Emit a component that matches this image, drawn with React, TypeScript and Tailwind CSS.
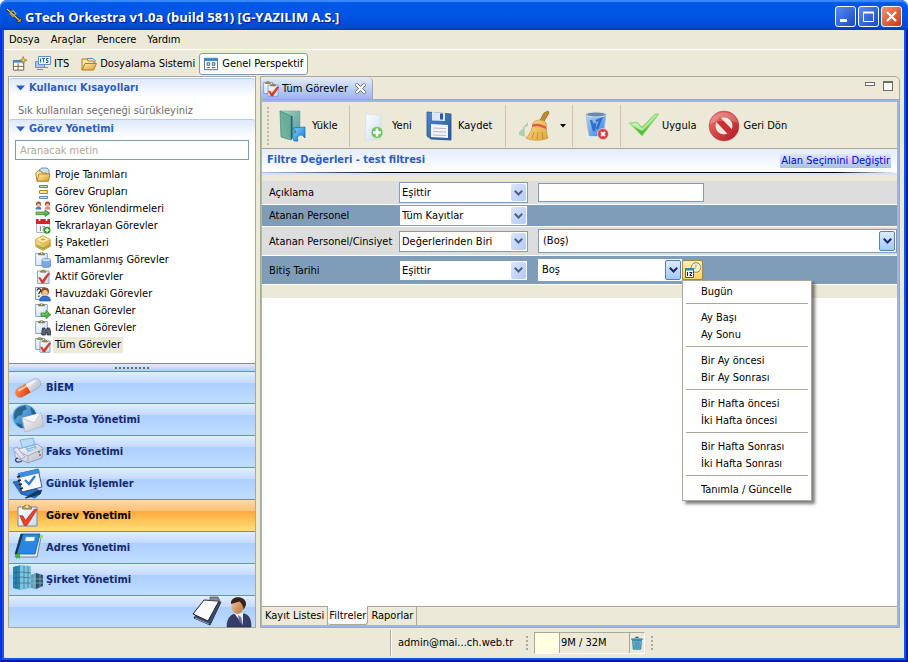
import type { ReactNode } from "react";

type IconProps = { className?: string };

function Icon16({ children, className = "size-4" }: { children: ReactNode; className?: string }) {
  return (
    <svg viewBox="0 0 16 16" className={`shrink-0 ${className}`} aria-hidden="true">
      {children}
    </svg>
  );
}

function Icon32({ children, className = "size-8" }: { children: ReactNode; className?: string }) {
  return (
    <svg viewBox="0 0 32 32" className={`shrink-0 ${className}`} aria-hidden="true">
      {children}
    </svg>
  );
}

/* ---------- shared gradients ---------- */

function Gradients() {
  const list: [string, string, string][] = [
    ["paper", "#ffffff", "#c9dcf2"],
    ["gold", "#fff3b8", "#d99a24"],
    ["straw", "#fbe08a", "#e0a436"],
    ["blue", "#7cc4f2", "#1668b4"],
    ["deep", "#4f86cf", "#2a5aa0"],
    ["teal", "#9fd0b4", "#2f8a98"],
    ["green", "#9be46e", "#2f9a2a"],
    ["lime", "#c9f3a4", "#4fc43a"],
    ["red", "#ee7a74", "#b01218"],
    ["pill", "#ff9a5a", "#e03a06"],
    ["grey", "#ffffff", "#b9bcc8"],
    ["skin", "#f3c9a0", "#b9713c"],
    ["glass", "#b4d8fa", "#2f7ce0"],
    ["sky", "#7fd0ff", "#1478d0"],
  ];
  return (
    <defs>
      {list.map(([id, a, b]) => (
        <linearGradient key={id} id={id} x1="0" y1="0" x2="1" y2="1">
          <stop offset="0" stopColor={a} />
          <stop offset="1" stopColor={b} />
        </linearGradient>
      ))}
    </defs>
  );
}

/* ---------- 16px icons ---------- */

function TrumpetIcon() {
  return (
    <svg viewBox="0 0 16 16" className="size-4 shrink-0" aria-hidden="true">
      <Gradients />
      <path d="M1 2l12 11" stroke="#2a2410" strokeWidth="2.600" />
      <path d="M1 2l12 11" stroke="#e8cf7a" strokeWidth="1.200" />
      <path d="M4 6.500l3-3 3 3-3 3z" fill="none" stroke="#c8a83c" strokeWidth="1.100" />
      <path d="M10.500 15l4.500-4v4z" fill="#e8bd3a" stroke="#2a2410" strokeWidth=".6" />
    </svg>
  );
}

function NewWindowIcon() {
  return (
    <Icon16 className="h-4 w-[15px]">
      <path d="M1.500 4.500h11v10h-11z" fill="#fff" stroke="#6b5f3c" />
      <path d="M1 4h12v2.500H1z" fill="#3f86c8" />
      <path d="M6.500 7v7.500M2 10.500h10.500" stroke="#6b5f3c" />
      <path d="M12 0l1 3 3 1-3 1-1 3-1-3-3-1 3-1z" fill="#f6cf4c" stroke="#8d6a12" strokeWidth=".7" />
    </Icon16>
  );
}

function ItsIcon() {
  return (
    <Icon16>
      <path d="M.5 5.500h9v6h-9zM2 13.500h6" fill="#a9c6ec" stroke="#5f8fce" />
      <path d="M3.500.5h12v8h-12z" fill="#fff" stroke="#5f8fce" />
      <path d="M5.500 2.500v4M7 2.500h3M8.500 2.500v4M13.500 2.500h-2v2h1.500v2H11" fill="none" stroke="#2d5fa8" />
      <path d="M8 11.500h5" stroke="#5f8fce" />
    </Icon16>
  );
}

function OpenFolderIcon() {
  return (
    <Icon16>
      <path d="M1 3h5l1 2h6v3H4l-3 6z" fill="#fbe7a4" stroke="#b07d1c" />
      <path d="M4 7.500h11.500L12.500 14H1.200z" fill="url(#gold)" stroke="#b07d1c" />
      <path d="M6 2.500h6l2 2v2" fill="none" stroke="#4d84c8" />
    </Icon16>
  );
}

function PerspectiveIcon() {
  return (
    <Icon16 className="size-[14px]">
      <path d="M.5 1.500h15v13H.5z" fill="#fff" stroke="#2d5f94" />
      <path d="M1 2h14v2.500H1z" fill="#3c86c4" />
      <path d="M3.500 6.500h3v3h-3zM9.500 6.500h3v3h-3z" fill="#cfe2f6" stroke="#2d5f94" />
      <path d="M3 12h4M9 12h4" stroke="#2d5f94" />
    </Icon16>
  );
}

function ProjectIcon() {
  return (
    <Icon16>
      <path d="M4 3l3-2h5l2 2v5H4z" fill="#cfdff2" stroke="#6d8fbc" />
      <path d="M.8 6l2-2H6l1 2h5v8H2z" fill="#fbe7a4" stroke="#b98428" />
      <path d="M4 7h11l-1.500 7.200H2z" fill="url(#gold)" stroke="#b98428" />
    </Icon16>
  );
}

function GroupsIcon() {
  return (
    <Icon16>
      <path d="M4.500 1.500h8v2h-8z" fill="#b7dcc0" stroke="#4d8f70" />
      <path d="M4.500 6.500h8v3h-8z" fill="#fbe9a0" stroke="#b08a1c" />
      <path d="M4.500 12.500h8v2h-8z" fill="#cfe2f6" stroke="#5b86b8" />
    </Icon16>
  );
}

function PeopleArrowIcon() {
  return (
    <Icon16>
      <path d="M.5 8.500c0-4 6-4 6 0z" fill="#3c7fd0" />
      <path d="M9.500 8.500c0-4 6-4 6 0z" fill="#e87f98" />
      <circle cx="3.500" cy="3" r="2.500" fill="#9a5a2a" />
      <circle cx="3.500" cy="4" r="1.600" fill="#f2c79c" />
      <circle cx="12.500" cy="3" r="2.500" fill="#b5402c" />
      <circle cx="12.500" cy="4" r="1.600" fill="#f2c79c" />
      <path d="M1 11h9V9l5 3.300-5 3.300v-2H1z" fill="url(#green)" stroke="#2c7a30" strokeWidth=".7" />
    </Icon16>
  );
}

function CalendarPlusIcon() {
  return (
    <Icon16>
      <path d="M1.500 2.500h13v12h-13z" fill="#f4f4f6" stroke="#b4b4bc" />
      <path d="M1 1h14v5H1z" fill="#d8202a" />
      <path d="M4.500 0v3M11.500 0v3" stroke="#fff" strokeWidth="1.600" />
      <path d="M5.500 8v5M7.500 8.500h2l-1.500 4" fill="none" stroke="#8a8a94" />
      <circle cx="12" cy="12.300" r="3.500" fill="#2f9a2a" />
      <path d="M12 10.300v4M10 12.300h4" stroke="#fff" strokeWidth="1.400" />
    </Icon16>
  );
}

function PackageIcon() {
  return (
    <Icon16>
      <path d="M8 .8l7.200 3.700v7L8 15.300.8 11.500v-7z" fill="url(#gold)" stroke="#c08a1c" strokeWidth=".8" />
      <path d="M8 .8l7.200 3.700L8 8.300.8 4.500z" fill="#fdeeb0" stroke="#d9a63a" strokeWidth=".7" />
      <path d="M1.500 9.500l6.500 3.300 6.500-3.300v1.500L8 14.300 1.500 11z" fill="#7db53c" />
      <path d="M8 3v3M6 4.500h4" stroke="#e0a020" />
    </Icon16>
  );
}

function Clipboard({ children }: { children?: ReactNode }) {
  return (
    <Icon16>
      <path d="M.7 1.500h11.600v12H.7z" fill="url(#paper)" stroke="#7a9cc8" strokeWidth=".9" />
      <path d="M3.500 2.800c0-2.600 6-2.600 6 0z" fill="#8f8457" stroke="#574f30" strokeWidth=".6" />
      <circle cx="6.500" cy="1.500" r=".7" fill="#f1e2a0" />
      {children}
    </Icon16>
  );
}

const DoneTaskIcon = () => (
  <Clipboard>
    <path d="M7 8c0-2 8.500-2 8.500 0v6c0 2-8.500 2-8.500 0z" fill="#7fa9e0" stroke="#4f7fc0" strokeWidth=".7" />
    <ellipse cx="11.200" cy="8" rx="4" ry="1.200" fill="#c5dcf6" />
  </Clipboard>
);

function ActiveTaskIcon({ className }: IconProps) {
  return (
    <Icon16 className={className ?? "size-4"}>
      <path d="M2.500 2h11.500v12.500H2.500z" fill="url(#paper)" stroke="#7a9cc8" strokeWidth=".9" />
      <path d="M5.500 3.200c0-2.800 5.500-2.800 5.500 0z" fill="#b59d4c" stroke="#6b5a25" strokeWidth=".6" />
      <path d="M3.500 8.500l2 .2 1.700 2.800L13 4.200l1.800.2L8.500 14H6.700z" fill="#e23a1e" stroke="#a81c0a" strokeWidth=".4" />
    </Icon16>
  );
}

const PoolTaskIcon = () => (
  <Icon16>
    <path d="M.6 1.500h9v12h-9z" fill="#eef2f8" stroke="#7a8494" strokeWidth=".9" />
    <path d="M2.200 4.500c0-2.500 3.500-2.300 3.500 0 0 1.500-1.800 1.500-1.800 3.500M3.900 9.500v1.500" fill="none" stroke="#222" strokeWidth="1.200" />
    <path d="M4.500 15c0-7 11-7 11 0z" fill="#2f72cc" stroke="#1c4f9c" strokeWidth=".6" />
    <circle cx="10" cy="5.500" r="4" fill="#8a4a1c" />
    <circle cx="10" cy="7" r="2.900" fill="#f2bd8a" />
  </Icon16>
);

const AssignedTaskIcon = () => (
  <Clipboard>
    <path d="M6 10h5V7.500l4.800 4.200L11 15.800v-2.500H6z" fill="url(#green)" stroke="#2c7a30" strokeWidth=".7" />
  </Clipboard>
);

const WatchedTaskIcon = () => (
  <Clipboard>
    <path d="M7.500 8h2.500v2h2V8h2.500l1.200 4v3h-3.500v-2.500h-1.800V15H6.800v-3z" fill="#5a6674" stroke="#252d38" strokeWidth=".8" />
  </Clipboard>
);

function AllTasksIcon() {
  return (
    <Icon16>
      <path d="M.7 1.500h9v11h-9z" fill="url(#paper)" stroke="#7a9cc8" strokeWidth=".9" />
      <path d="M2.500 2.500c0-2.500 5-2.500 5 0z" fill="#b59d4c" stroke="#6b5a25" strokeWidth=".6" />
      <path d="M5 4h10v11.300H5z" fill="url(#paper)" stroke="#7a9cc8" strokeWidth=".9" />
      <path d="M7.500 5c0-2.500 5-2.500 5 0z" fill="#b59d4c" stroke="#6b5a25" strokeWidth=".6" />
      <path d="M5.500 10l1.800.2 1.400 2.200L14 6l1.800.2L9.800 15H8z" fill="#e23a1e" stroke="#a81c0a" strokeWidth=".4" />
    </Icon16>
  );
}

function TrashSmallIcon() {
  return (
    <Icon16 className="h-4 w-[14px]">
      <path d="M1.500 3.500h13M6 1.500h4" stroke="#1d6f96" strokeWidth="1.500" />
      <path d="M3 5h10l-.7 10H3.700z" fill="#7cc4dc" stroke="#1d6f96" />
      <path d="M5.800 6v8M8 6v8M10.200 6v8" stroke="#1d6f96" />
    </Icon16>
  );
}

function DateClockIcon() {
  return (
    <Icon16 className="size-4">
      <circle cx="11" cy="5.500" r="4.800" fill="#f6f0d8" stroke="#8b8468" />
      <path d="M11 2.500v3l-2 1.500" fill="none" stroke="#c89a20" />
      <path d="M.5 6.500h8v9h-8z" fill="#fff" stroke="#1f5fa8" />
      <path d="M0 6h9v2.500H0z" fill="#2f8aa8" />
      <path d="M2.500 10v4M4.500 10.500H7L4.800 13.500H7" fill="none" stroke="#12127c" />
    </Icon16>
  );
}

/* ---------- 32px icons ---------- */

const PillIcon = () => (
  <Icon32>
    <g transform="rotate(-30 16 16)">
      <rect x="2" y="11" width="28" height="10" rx="5" fill="url(#grey)" stroke="#9aa4cc" strokeWidth=".6" />
      <path d="M16 11H7a5 5 0 0 0 0 10h9z" fill="url(#pill)" />
      <rect x="6" y="12.500" width="20" height="2" rx="1" fill="#fff" opacity=".65" />
    </g>
  </Icon32>
);

const GlobeMailIcon = () => (
  <Icon32>
    <circle cx="12.500" cy="12.500" r="12" fill="url(#blue)" />
    <path d="M3 7c4-6 8-4 10-6l2 4-4 2-1 4-4 1-3 4c-2-3-1-6 0-9zM18 3c4 2 6 6 6 9l-4-2zM4 19l5 1 2 4c-3 0-6-2-7-5z" fill="#1d5878" opacity=".8" />
    <path d="M10 14l19-5 3 13-19 6z" fill="url(#grey)" stroke="#b0b0b4" strokeWidth=".7" />
    <path d="M10 14l12 5 7-10" fill="#f6f6f6" stroke="#bcbcc0" strokeWidth=".8" />
  </Icon32>
);

const FaxIcon = () => (
  <Icon32>
    <path d="M8 4l13-2 3 9-13 3z" fill="#b8dbf8" stroke="#6f9fd0" strokeWidth=".7" />
    <path d="M3 14l22-6 6 4-1 10-14 5-13-6z" fill="url(#grey)" stroke="#8c90b4" strokeWidth=".8" />
    <path d="M10 17l6 3 15-7" fill="none" stroke="#9a9cc0" strokeWidth=".8" />
    <path d="M16 20v7" stroke="#9a9cc0" strokeWidth=".8" />
    <path d="M13 11l9-3 3 4-9 4z" fill="#7fb8ea" />
    <path d="M15 12l7-2M16 14l7-2" stroke="#e8f4ff" strokeWidth=".8" />
    <path d="M1 13l4-2 8 10-4 2z" fill="#dfe2f2" stroke="#8c90b4" strokeWidth=".7" />
    <path d="M6 22c-5 1-2 6 4 3" fill="none" stroke="#3a3a44" strokeWidth="1.200" />
    <circle cx="27" cy="16" r="1" fill="#40a060" />
    <circle cx="28" cy="19" r="1" fill="#e04040" />
  </Icon32>
);

const PlannerIcon = () => (
  <Icon32>
    <path d="M1 14l8 12 14 4 6-5-14-14z" fill="#2d6fc4" stroke="#164a94" strokeWidth=".7" />
    <path d="M6 6l20-5 4 18-20 5z" fill="#f8fbff" stroke="#2b3b58" strokeWidth=".8" />
    <path d="M6 5l21-4 1 4-21 5z" fill="#3f8be0" />
    <path d="M13 12l4 4 6-8" fill="none" stroke="#2b78d0" strokeWidth="2.200" />
    <path d="M5 9l3-1M6 13l3-1M7 17l3-1M8 21l3-1" stroke="#222" strokeWidth="1.400" />
    <path d="M13 30l12-7 5-1-2 4-13 4z" fill="#123c66" stroke="#0a2440" strokeWidth=".5" />
  </Icon32>
);

const TaskBigIcon = () => (
  <Icon32>
    <path d="M6 7h19v19H6z" fill="url(#paper)" stroke="#6d88b4" />
    <path d="M10.500 9c0-5 9-5 9 0z" fill="#c9b062" stroke="#6b5a25" strokeWidth=".8" />
    <circle cx="15" cy="6.500" r="1.200" fill="#fff2b4" />
    <path d="M7.500 15.500l3.500.3 2.500 4.500L22.500 9l2.800.4L15 25.500h-3z" fill="#e8412a" stroke="#a81c0a" strokeWidth=".5" />
  </Icon32>
);

const AddressBookIcon = () => (
  <Icon32>
    <path d="M8 5h21l-4 20H3z" fill="#e9edf2" stroke="#59677c" strokeWidth=".8" />
    <path d="M9 2h19l-5 20H3z" fill="#2a86e0" stroke="#1658a0" strokeWidth=".8" />
    <path d="M9 2h2L5 22H3z" fill="#20303f" />
    <path d="M14 5h9l-1 4h-9z" fill="#fff" stroke="#9cb4d0" strokeWidth=".5" />
    <path d="M4 22h4v5l-2-1.500L4 27z" fill="#45b43a" />
    <path d="M28 3h3v3l-3 1z" fill="#9edc6a" />
  </Icon32>
);

const BuildingIcon = () => (
  <Icon32>
    <path d="M1 3l8-2v25l-8-2z" fill="#2f86ac" />
    <path d="M8 1l11 1v22L8 26z" fill="#7fc4de" />
    <path d="M1 9l7-1 11 1M1 14l7-1 11 1M1 19h18M4 2v23M12 2v23M16 2v22" fill="none" stroke="#1d5f7c" strokeWidth=".7" opacity=".8" />
    <path d="M19 11l5-2v16l-5-1z" fill="#5f9cb8" />
    <path d="M24 9l7 2v11l-7 3z" fill="#2d5468" />
    <path d="M19 15h12M19 19h12M22 10v15M28 10v14" stroke="#9fc4d4" strokeWidth=".6" />
  </Icon32>
);

const NotepadIcon = () => (
  <Icon32>
    <path d="M14 6l16 0-11 23L3 22z" fill="#3b4c74" stroke="#26324f" />
    <path d="M13 4l15 1-11 20L2 18z" fill="#fafafa" stroke="#222" />
    <path d="M19 1l8 0 2 4-10-.5z" fill="#85879a" stroke="#4c4e60" strokeWidth=".7" />
    <path d="M4 22l14 6" stroke="#8fa0c8" />
  </Icon32>
);

const BusinessmanIcon = () => (
  <Icon32>
    <path d="M4 31c0-8 3-12 8-13l10 0c5 2 6 7 6 13z" fill="#343c68" stroke="#1f2547" strokeWidth=".6" />
    <path d="M11 17h9l0 12z" fill="#eef0f8" />
    <path d="M15 19l3 2 2 8-4-4z" fill="#6a6ea4" />
    <ellipse cx="14.500" cy="10" rx="6" ry="8" fill="url(#skin)" />
    <path d="M8 8C7-1 24-1 23 9l-2.500 5c0-4-2-7-4-8.500z" fill="#3a2216" />
  </Icon32>
);

const LoadIcon = () => (
  <Icon32>
    <path d="M3 1h20v21l-4 4-7 2z" fill="url(#teal)" opacity=".85" stroke="#6b9c90" strokeWidth=".6" />
    <path d="M3 1l11 5v24L4 27z" fill="#66ac94" opacity=".9" stroke="#2f7f7c" strokeWidth=".7" />
    <path d="M14 6v24l1.500-2V6z" fill="#2b5f70" />
    <path d="M17 31c-3-5-1-9 2-9l-3-4 12-1v11l-3-3c-3 0-6 1-4 6z" fill="url(#sky)" stroke="#1668a8" strokeWidth=".7" />
  </Icon32>
);

const NewIcon = () => (
  <Icon32>
    <path d="M8 4l15 1v24l-16 1z" fill="url(#paper)" stroke="#c8d4e0" strokeWidth=".5" />
    <circle cx="19" cy="22.500" r="6" fill="#6ac45c" stroke="#d4ecd0" strokeWidth=".8" />
    <path d="M19 18.500v8M15 22.500h8" stroke="#fff" strokeWidth="2.600" />
  </Icon32>
);

const SaveIcon = () => (
  <Icon32>
    <path d="M4 2l24 2v26l-20-1-4-3z" fill="url(#deep)" stroke="#274f8c" strokeWidth=".8" />
    <path d="M9 2l13 1v8l-13-.5z" fill="#dce7f6" />
    <path d="M17 3.500h3v6h-3z" fill="#2a5aa0" />
    <path d="M8 14l17 1v13l-17-1z" fill="#f4f5f7" />
    <path d="M10 18l13 .6M10 21.500l13 .6M10 25l13 .6" stroke="#b4bac8" />
  </Icon32>
);

const BroomIcon = () => (
  <Icon32>
    <path d="M1 25c-1-4 3-5 6-8 0 3-1 8 1 10zM4 18l6-6 0 4z" fill="#a8c8a8" opacity=".85" />
    <path d="M21 12L26 3l4-2 1 2-6 10z" fill="#c08a2c" stroke="#7a5414" strokeWidth=".6" />
    <path d="M15 13c3-4 10-4 13 0 1 6 0 10 2 15-6 3-15 3-22 0 4-4 6-8 7-15z" fill="url(#straw)" stroke="#c4923a" strokeWidth=".7" />
    <path d="M14.500 14.500c5-2 9 0 13.500 2v2.500c-4-2-9-4-14-2z" fill="#e0564a" />
    <path d="M14 28l2-6M19 29l1-7M25 29l-1-7" stroke="#b98428" strokeWidth=".8" />
  </Icon32>
);

const DeleteBinIcon = () => (
  <Icon32>
    <path d="M5 4h20l-3 23H8z" fill="url(#glass)" stroke="#9cb8d4" strokeWidth=".8" />
    <ellipse cx="15" cy="4.500" rx="10" ry="2.500" fill="#6f88a4" stroke="#d4dfea" />
    <path d="M10 10l3 11 1-8M16 19l4-10-5 2" fill="none" stroke="#1454b8" strokeWidth="2.400" opacity=".7" />
    <path d="M6 22l1 5h14" fill="none" stroke="#eaf4ff" strokeWidth="1.400" />
    <circle cx="22" cy="24" r="5.500" fill="#dc3a3a" stroke="#f6d4d0" strokeWidth=".8" />
    <path d="M20 22l4 4M24 22l-4 4" stroke="#fff" strokeWidth="1.800" />
  </Icon32>
);

const ApplyIcon = () => (
  <Icon32>
    <path d="M1 13l8-1 5 5L27 4h4L14 26z" fill="url(#lime)" stroke="#8cd07c" strokeWidth=".7" />
    <path d="M3 14l6-1 5 6L27 5h2L14 21z" fill="#e8fbd8" opacity=".55" />
    <path d="M5 16l9 9 8-10-8 6z" fill="#3fb42c" opacity=".7" />
  </Icon32>
);

const BackIcon = () => (
  <Icon32>
    <circle cx="16" cy="16" r="15" fill="url(#red)" stroke="#b84048" strokeWidth=".5" />
    <circle cx="16" cy="16" r="8.500" fill="#ece9d8" />
    <path d="M8 11.500L12 7l13 13.500-4.500 4.500z" fill="#cc2e36" />
    <path d="M2 14c2-14 24-16 28-1-9-3-18-3-28 1z" fill="#fff" opacity=".22" />
  </Icon32>
);

/* ---------- window chrome ---------- */

function TitleBar() {
  const base =
    "flex size-[21px] items-center justify-center rounded-[3px] border border-white";
  return (
    <header className="flex h-[30px] shrink-0 items-center gap-[3px] rounded-t-[7px] bg-linear-to-b from-[#0058e6] via-[#0055e5] to-[#0047d0] pr-[6px] pl-[6px] shadow-[inset_0_2px_1px_#3b8bff,inset_0_-2px_1px_#0040c0]">
      <TrumpetIcon />
      <h1 className="flex-1 truncate pt-[3px] font-['Open_Sans','Noto_Sans',sans-serif] text-[13px] leading-[18px] font-bold text-white [text-shadow:1px_1px_1px_#0a1883]">
        GTech Orkestra v1.0a (build 581) [G-YAZILIM A.S.]
      </h1>
      <div className="flex gap-[2px] pt-[2px]">
        <button aria-label="Simge durumuna küçült" className={`${base} bg-linear-to-br from-[#5a8bf0] to-[#1c46c8]`}>
          <svg viewBox="0 0 19 19" className="size-[19px]" aria-hidden="true">
            <path d="M4 12h7v3H4z" fill="#fff" />
          </svg>
        </button>
        <button aria-label="Ekranı kapla" className={`${base} bg-linear-to-br from-[#5a8bf0] to-[#1c46c8]`}>
          <svg viewBox="0 0 19 19" className="size-[19px]" aria-hidden="true">
            <path d="M4.500 5.500h10v9h-10zM4 5h11M4 6h11" fill="none" stroke="#fff" />
          </svg>
        </button>
        <button aria-label="Kapat" className={`${base} bg-linear-to-br from-[#f0906c] to-[#c8330c]`}>
          <svg viewBox="0 0 19 19" className="size-[19px]" aria-hidden="true">
            <path d="M5 5l9 9M14 5l-9 9" stroke="#fff" strokeWidth="2.200" />
          </svg>
        </button>
      </div>
    </header>
  );
}

function MenuBar() {
  return (
    <nav className="flex h-5 shrink-0 items-center gap-[11px] border-b border-white pl-[5px]">
      {["Dosya", "Araçlar", "Pencere", "Yardım"].map((m) => (
        <button key={m}>{m}</button>
      ))}
    </nav>
  );
}

function PerspectiveBar() {
  return (
    <div className="flex h-[26px] shrink-0 items-center pt-px pl-2">
      <button aria-label="Yeni perspektif" className="mr-2">
        <NewWindowIcon />
      </button>
      <button className="mr-3 flex items-center gap-[3px]">
        <ItsIcon />
        ITS
      </button>
      <button className="flex items-center gap-[3px]">
        <OpenFolderIcon />
        Dosyalama Sistemi
      </button>
      <button className="ml-1 flex h-[22px] items-center gap-1 rounded-[3px] border border-[#7f9db9] bg-white px-1">
        <PerspectiveIcon />
        Genel Perspektif
      </button>
    </div>
  );
}

/* ---------- left side ---------- */

function SectionHeader({ title }: { title: string }) {
  return (
    <h2 className="rounded-t-[3px] border-t border-[#b4cbf2] bg-linear-to-b from-[#dfe9fc] to-white">
      <button className="flex h-[18px] w-full items-center gap-1 pl-[7px] font-bold text-[#2a5fc0]">
        <svg viewBox="0 0 9 6" className="h-[6px] w-[9px]" aria-hidden="true">
          <path d="M0 .5h9L4.500 5.500z" fill="#2a5fc0" />
        </svg>
        {title}
      </button>
    </h2>
  );
}

const tasks: [string, ReactNode][] = [
  ["Proje Tanımları", <ProjectIcon />],
  ["Görev Grupları", <GroupsIcon />],
  ["Görev Yönlendirmeleri", <PeopleArrowIcon />],
  ["Tekrarlayan Görevler", <CalendarPlusIcon />],
  ["İş Paketleri", <PackageIcon />],
  ["Tamamlanmış Görevler", <DoneTaskIcon />],
  ["Aktif Görevler", <ActiveTaskIcon />],
  ["Havuzdaki Görevler", <PoolTaskIcon />],
  ["Atanan Görevler", <AssignedTaskIcon />],
  ["İzlenen Görevler", <WatchedTaskIcon />],
  ["Tüm Görevler", <AllTasksIcon />],
];

const modules: [string, ReactNode][] = [
  ["BİEM", <PillIcon />],
  ["E-Posta Yönetimi", <GlobeMailIcon />],
  ["Faks Yönetimi", <FaxIcon />],
  ["Günlük İşlemler", <PlannerIcon />],
  ["Görev Yönetimi", <TaskBigIcon />],
  ["Adres Yönetimi", <AddressBookIcon />],
  ["Şirket Yönetimi", <BuildingIcon />],
];

const barBlue =
  "bg-[linear-gradient(to_bottom,#e1edff_0%,#c3daff_36%,#adcfff_37%,#c0dcff_100%)] border-[#5f8fcf]";
const barOrange =
  "bg-[linear-gradient(to_bottom,#ffd9a6_0%,#ffc07a_36%,#ffaa3e_37%,#ffdf79_100%)] border-[#5f8fcf]";

function Sidebar() {
  return (
    <aside className="flex w-[248px] shrink-0 flex-col border border-[#aca899] bg-white pt-px">
      <SectionHeader title="Kullanıcı Kısayolları" />
      <p className="flex h-[22px] items-end pl-[9px] leading-4 text-[#6d6d6d]">
        Sık kullanılan seçeneği sürükleyiniz
      </p>
      <SectionHeader title="Görev Yönetimi" />
      <div className="px-[6px] pt-[2px]">
        <input
          type="text"
          aria-label="Aranacak metin"
          placeholder="Aranacak metin"
          className="h-5 w-full border border-[#7f9db9] bg-white px-1 outline-none placeholder:text-[#aca899]"
        />
      </div>
      <ul className="flex-1 pt-[6px] pl-[26px]">
        {tasks.map(([name, icon]) => (
          <li key={name}>
            <button className="flex h-[17px] items-center gap-[2px]">
              {icon}
              <span
                className={`px-[2px] leading-4 ${name === "Tüm Görevler" ? "bg-[#ece9d8]" : ""}`}
              >
                {name}
              </span>
            </button>
          </li>
        ))}
      </ul>
      <div className="flex h-2 items-center justify-center gap-[2px] border-t border-[#5f8fcf] bg-linear-to-b from-[#e1edff] to-[#adcfff]">
        {Array.from({ length: 9 }, (_, i) => (
          <span key={i} className="size-[2px] bg-[#6b6b60]" />
        ))}
      </div>
      <nav>
        {modules.map(([name, icon]) => {
          const active = name === "Görev Yönetimi";
          return (
            <button
              key={name}
              className={`flex h-8 w-full items-center gap-[2px] border-t pl-[3px] font-bold ${active ? barOrange : barBlue} ${active ? "text-black" : "text-[#15296b]"}`}
            >
              {icon}
              {name}
            </button>
          );
        })}
        <div className={`flex h-8 items-center justify-end border-t ${barBlue}`}>
          <button aria-label="Not defteri">
            <NotepadIcon />
          </button>
          <button aria-label="Kullanıcı">
            <BusinessmanIcon />
          </button>
        </div>
      </nav>
    </aside>
  );
}

/* ---------- editor area ---------- */

function Grip() {
  return (
    <span className="flex flex-col gap-[2px]">
      {Array.from({ length: 10 }, (_, i) => (
        <span key={i} className="size-[2px] rounded-full bg-[#aca899]" />
      ))}
    </span>
  );
}

const Divider = () => <span className="w-px self-stretch bg-[#c9c5b2]" />;

function EditorTabs() {
  return (
    <div className="flex h-[23px] items-stretch rounded-tr-[5px] border-b border-[#aca899]">
      <button className="flex items-center gap-[3px] rounded-tr-[5px] border-r border-[#aca899] bg-linear-to-b from-[#e6ecf6] to-[#99b4f0] pt-px pr-[6px] pl-[2px]">
        <AllTasksIcon />
        Tüm Görevler
        <svg viewBox="0 0 11 11" className="ml-1 size-[11px]" aria-hidden="true">
          <path
            d="M.5 1.500l1-1h1l3 3 3-3h1l1 1v1l-3 3 3 3v1l-1 1h-1l-3-3-3 3h-1l-1-1v-1l3-3-3-3z"
            fill="#fff"
            stroke="#6d6d62"
          />
        </svg>
      </button>
      <div className="ml-auto flex gap-2 pt-1 pr-[6px]">
        <button aria-label="Küçült" className="mt-px h-1 w-[10px] border border-[#6d6a5e] bg-white" />
        <button aria-label="Büyüt" className="h-[10px] w-[10px] border border-t-2 border-[#6d6a5e] bg-white" />
      </div>
    </div>
  );
}

function Toolbar() {
  return (
    <div className="flex h-[47px] items-center border-b border-[#aca899] pt-[3px] pb-px pl-[5px]">
      <Grip />
      <button className="ml-2 flex w-[72px] items-center gap-[3px]">
        <LoadIcon />
        Yükle
      </button>
      <Divider />
      <button className="ml-2 flex w-[65px] items-center gap-[2px]">
        <NewIcon />
        Yeni
      </button>
      <button className="flex w-[82px] items-center gap-[3px]">
        <SaveIcon />
        Kaydet
      </button>
      <Divider />
      <button aria-label="Temizle" className="ml-3 flex w-[54px] items-center justify-between pr-[6px]">
        <BroomIcon />
        <svg viewBox="0 0 6 4" className="h-1 w-[6px]" aria-hidden="true">
          <path d="M0 0h6L3 3.500z" />
        </svg>
      </button>
      <Divider />
      <button aria-label="Sil" className="flex w-[47px] justify-center">
        <DeleteBinIcon />
      </button>
      <Divider />
      <button className="ml-[7px] flex items-center gap-[2px]">
        <ApplyIcon />
        Uygula
      </button>
      <button className="ml-3 flex items-center gap-[3px]">
        <BackIcon />
        Geri Dön
      </button>
    </div>
  );
}

function Chevron({ color }: { color: string }) {
  return (
    <svg viewBox="0 0 9 6" className="h-[6px] w-[9px]" aria-hidden="true">
      <path d="M.8.800l3.700 3.700L8.200.800" fill="none" stroke={color} strokeWidth="2" />
    </svg>
  );
}

function Operator({ label, value }: { label: string; value: string }) {
  return (
    <div className="relative h-[21px] w-[129px] shrink-0 border border-[#7f9db9] bg-white">
      <select
        aria-label={`${label} koşulu`}
        className="size-full appearance-none bg-transparent pt-px pr-5 pl-[2px] outline-none"
      >
        <option>{value}</option>
      </select>
      <span className="pointer-events-none absolute inset-y-px right-px flex w-[15px] items-center justify-center rounded-[2px] bg-linear-to-br from-[#dbe6fd] to-[#b4c9f8]">
        <Chevron color="#4d6185" />
      </span>
    </div>
  );
}

function ValueSelect({ label, value, className }: { label: string; value: string; className: string }) {
  return (
    <div className={`relative bg-white ${className}`}>
      <select
        aria-label={`${label} değeri`}
        className="size-full appearance-none bg-transparent pr-5 pl-1 outline-none"
      >
        <option>{value}</option>
      </select>
      <span className="pointer-events-none absolute inset-y-px right-px flex w-4 items-center justify-center rounded-[2px] border border-[#5b7fb0] bg-linear-to-b from-[#dcebff] to-[#a4c8fa]">
        <Chevron color="#15296b" />
      </span>
    </div>
  );
}

const menuGroups = [
  ["Bugün"],
  ["Ay Başı", "Ay Sonu"],
  ["Bir Ay öncesi", "Bir Ay Sonrası"],
  ["Bir Hafta öncesi", "İki Hafta öncesi"],
  ["Bir Hafta Sonrası", "İki Hafta Sonrası"],
  ["Tanımla / Güncelle"],
];

function DateMenu() {
  return (
    <div
      role="menu"
      className="absolute top-full left-0 z-10 w-[130px] border border-[#aca899] bg-white px-[3px] py-[2px] shadow-[3px_3px_3px_#00000080]"
    >
      {menuGroups.map((group, i) => (
        <div key={group[0]}>
          {i > 0 && <hr className="mt-[3px] mb-[5px] border-t border-[#aca899]" />}
          {group.map((item) => (
            <button key={item} role="menuitem" className="block h-[17px] w-full pl-[15px] text-left leading-[17px] whitespace-nowrap">
              {item}
            </button>
          ))}
        </div>
      ))}
    </div>
  );
}

function FilterRow({
  label,
  value,
  shade,
  children,
}: {
  label: string;
  value: string;
  shade: string;
  children?: ReactNode;
}) {
  return (
    <div className={`flex items-center border-b border-white pl-[7px] ${shade}`}>
      <span className="w-[130px] shrink-0 pt-px whitespace-nowrap">{label}</span>
      <Operator label={label} value={value} />
      <div className="ml-[10px] flex min-w-0 flex-1 items-center">{children}</div>
    </div>
  );
}

function Filters() {
  return (
    <section className="flex-1 bg-white">
      <div className="flex h-6 items-center justify-between border-b border-black bg-linear-to-b from-[#e4ecfd] to-white pr-[6px] pl-[5px] [border-image:linear-gradient(to_right,#b0c8f0,#000_20%,#000_90%,#fff)_1]">
        <h2 className="pb-[2px] font-bold text-[#2a5fc0]">Filtre Değerleri - test filtresi</h2>
        <a href="#alan" className="bg-linear-to-b from-[#dfe8fa] to-[#a9bfe6] px-px leading-[14px] text-[#0000f0]">
          Alan Seçimini Değiştir
        </a>
      </div>
      <div className="h-2 border-t-2 border-[#d5e2fa] bg-[#ece9d8]" />
      <FilterRow label="Açıklama" value="Eşittir" shade="h-6 bg-[#dddddd]">
        <input
          type="text"
          aria-label="Açıklama değeri"
          className="h-[19px] w-[166px] border border-[#7f9db9] bg-white px-1 outline-none"
        />
      </FilterRow>
      <FilterRow label="Atanan Personel" value="Tüm Kayıtlar" shade="h-[22px] bg-[#7f9db9]" />
      <FilterRow label="Atanan Personel/Cinsiyet" value="Değerlerinden Biri" shade="h-[29px] bg-[#dddddd]">
        <ValueSelect label="Cinsiyet" value="(Boş)" className="h-6 flex-1 border border-[#7f9db9]" />
      </FilterRow>
      <FilterRow label="Bitiş Tarihi" value="Eşittir" shade="h-[29px] bg-[#7f9db9]">
        <ValueSelect label="Bitiş Tarihi" value="Boş" className="h-[22px] w-[144px]" />
        <div className="relative">
          <button
            aria-label="Tarih seç"
            className="flex h-5 w-[21px] items-center justify-center rounded-[2px] border border-[#a08a3c] bg-linear-to-b from-[#fff0b8] to-[#fbd25e]"
          >
            <DateClockIcon />
          </button>
          <DateMenu />
        </div>
      </FilterRow>
      <div className="h-[13px] bg-[#ece9d8]" />
    </section>
  );
}

function PageTabs() {
  return (
    <div className="flex h-[19px] border-t border-[#aca899]">
      <button className="border-r border-[#aca899] px-[3px]">Kayıt Listesi</button>
      <button className="-mt-px rounded-b-[3px] border-r border-b border-[#aca899] bg-white px-px pt-[2px]">Filtreler</button>
      <button className="border-r border-[#aca899] px-[3px]">Raporlar</button>
    </div>
  );
}

function Editor() {
  return (
    <main className="flex min-w-0 flex-1 flex-col rounded-tr-[5px] border border-[#aca899]">
      <EditorTabs />
      <div className="flex flex-1 flex-col border-2 border-l border-[#99b4f0]">
        <Toolbar />
        <Filters />
        <PageTabs />
      </div>
    </main>
  );
}

/* ---------- status bar ---------- */

function StatusBar() {
  const dots = (
    <span className="flex flex-col gap-[2px]">
      {[0, 1, 2, 3].map((i) => (
        <span key={i} className="size-[2px] bg-[#aca899]" />
      ))}
    </span>
  );
  return (
    <footer className="flex h-[30px] shrink-0 items-center pl-[386px]">
      <span className="mr-[6px] h-[26px] w-[2px] border-r border-l border-r-white border-l-[#aca899]" />
      <span className="w-[128px]">admin@mai...ch.web.tr</span>
      {dots}
      <div className="mr-[6px] ml-[6px] flex h-[22px] items-stretch border border-[#aca899] border-r-white border-b-white">
        <span className="w-[25px] border-r border-[#aca899] bg-[#ffffe1]" />
        <span className="flex w-[69px] items-center pl-px">9M / 32M</span>
        <button aria-label="Belleği temizle" className="flex items-center border-l border-[#aca899]">
          <TrashSmallIcon />
        </button>
      </div>
      {dots}
    </footer>
  );
}

export default function App() {
  return (
    <div className="flex min-h-screen flex-col bg-white font-['DejaVu_Sans_Condensed','DejaVu_Sans',sans-serif] text-[11px] leading-4 text-black">
      <TitleBar />
      <div className="flex flex-1 flex-col border-x-2 border-b-2 border-r-[#001a9c] border-b-[#001a9c] border-l-[#0831d9]">
        <div className="flex flex-1 flex-col border-x-2 border-b-2 border-[#0f55ea] bg-[#ece9d8]">
          <MenuBar />
          <PerspectiveBar />
          <div className="flex flex-1 gap-1 px-1">
            <Sidebar />
            <Editor />
          </div>
          <StatusBar />
        </div>
      </div>
    </div>
  );
}
